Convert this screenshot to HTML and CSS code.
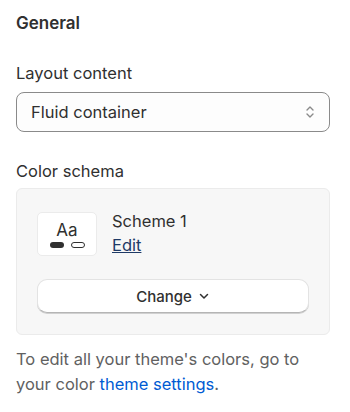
FILE: index.html
```html
<!DOCTYPE html>
<html>
<head>
<meta charset="utf-8">
<link rel="stylesheet" href="styles.css">
</head>
<body>
<div class="panel">
  <h2 class="title">General</h2>
  <div class="field">
    <label class="label">Layout content</label>
    <div class="select">
      <span>Fluid container</span>
      <svg class="updown" width="12" height="16" viewBox="0 0 12 16"><path d="M3 6 L6 3 L9 6 M3 10 L6 13 L9 10" fill="none" stroke="#8a8a8a" stroke-width="1.4" stroke-linecap="round" stroke-linejoin="round"/></svg>
    </div>
  </div>
  <div class="field">
    <label class="label">Color schema</label>
    <div class="card">
      <div class="scheme">
        <div class="swatch">
          <span class="aa">Aa</span>
          <span class="pills"><span class="pill fill"></span><span class="pill outline"></span></span>
        </div>
        <div class="info">
          <span class="name">Scheme 1</span>
          <a class="edit" href="#">Edit</a>
        </div>
      </div>
      <button class="change">Change <svg width="12" height="12" viewBox="0 0 12 12"><path d="M2.5 4.5 L6 8 L9.5 4.5" fill="none" stroke="#303030" stroke-width="1.5" stroke-linecap="round" stroke-linejoin="round"/></svg></button>
    </div>
  </div>
  <p class="help">To edit all your theme's colors, go to your color <a href="#" class="link">theme settings</a>.</p>
</div>
</body>
</html>
```
FILE: styles.css
```css
* { box-sizing: border-box; }
body { margin: 0; background: #fff; font-family: Inter, "Noto Sans", sans-serif; color: #303030; }
.panel { padding: 12px 20px 12px 16px; display: flex; flex-direction: column; }
.title { margin: 0; font-size: 17px; font-weight: 600; line-height: 22px; color: #303030; }
.field { display: flex; flex-direction: column; }
.label { font-size: 16.5px; line-height: 22px; color: #303030; margin-top: 28px; margin-bottom: 8px; }
.field + .field .label { margin-top: 28px; margin-bottom: 6px; }
.select { height: 40px; border: 1px solid #8a8a8a; border-radius: 8px; display: flex; align-items: center; justify-content: space-between; padding: 0 13px 0 14px; font-size: 16.5px; color: #303030; background: #fdfdfd; }
.updown { display: block; }
.card { background: #f7f7f7; border: 1px solid #ebebeb; border-radius: 6px; padding: 23px 20px 21px 20px; display: flex; flex-direction: column; gap: 23px; }
.scheme { display: flex; gap: 15px; align-items: flex-start; }
.swatch { width: 60px; height: 44px; background: #fff; border: 1px solid #ebebeb; border-radius: 5px; display: flex; flex-direction: column; align-items: center; justify-content: center; gap: 2px; }
.aa { font-size: 17px; line-height: 19px; color: #303030; }
.pills { display: flex; gap: 7px; }
.pill { width: 14px; height: 6px; border-radius: 3px; }
.pill.fill { background: #303030; }
.pill.outline { border: 1px solid #303030; }
.info { display: flex; flex-direction: column; gap: 2px; margin-top: -2px; }
.name { font-size: 16.5px; line-height: 22px; }
.edit { font-size: 16.5px; line-height: 22px; color: #1f3a66; text-decoration: underline; }
.change { height: 34px; width: 100%; background: #fff; border: 1px solid #e3e3e3; border-bottom-color: #b5b5b5; border-radius: 10px; font-family: inherit; font-size: 15px; font-weight: 500; color: #303030; display: flex; align-items: center; justify-content: center; gap: 6px; box-shadow: 0 1px 0 #d0d0d0; }
.help { margin: 12px 0 0; font-size: 16.5px; line-height: 25px; color: #616161; }
.link { color: #005bd3; text-decoration: none; }
```
